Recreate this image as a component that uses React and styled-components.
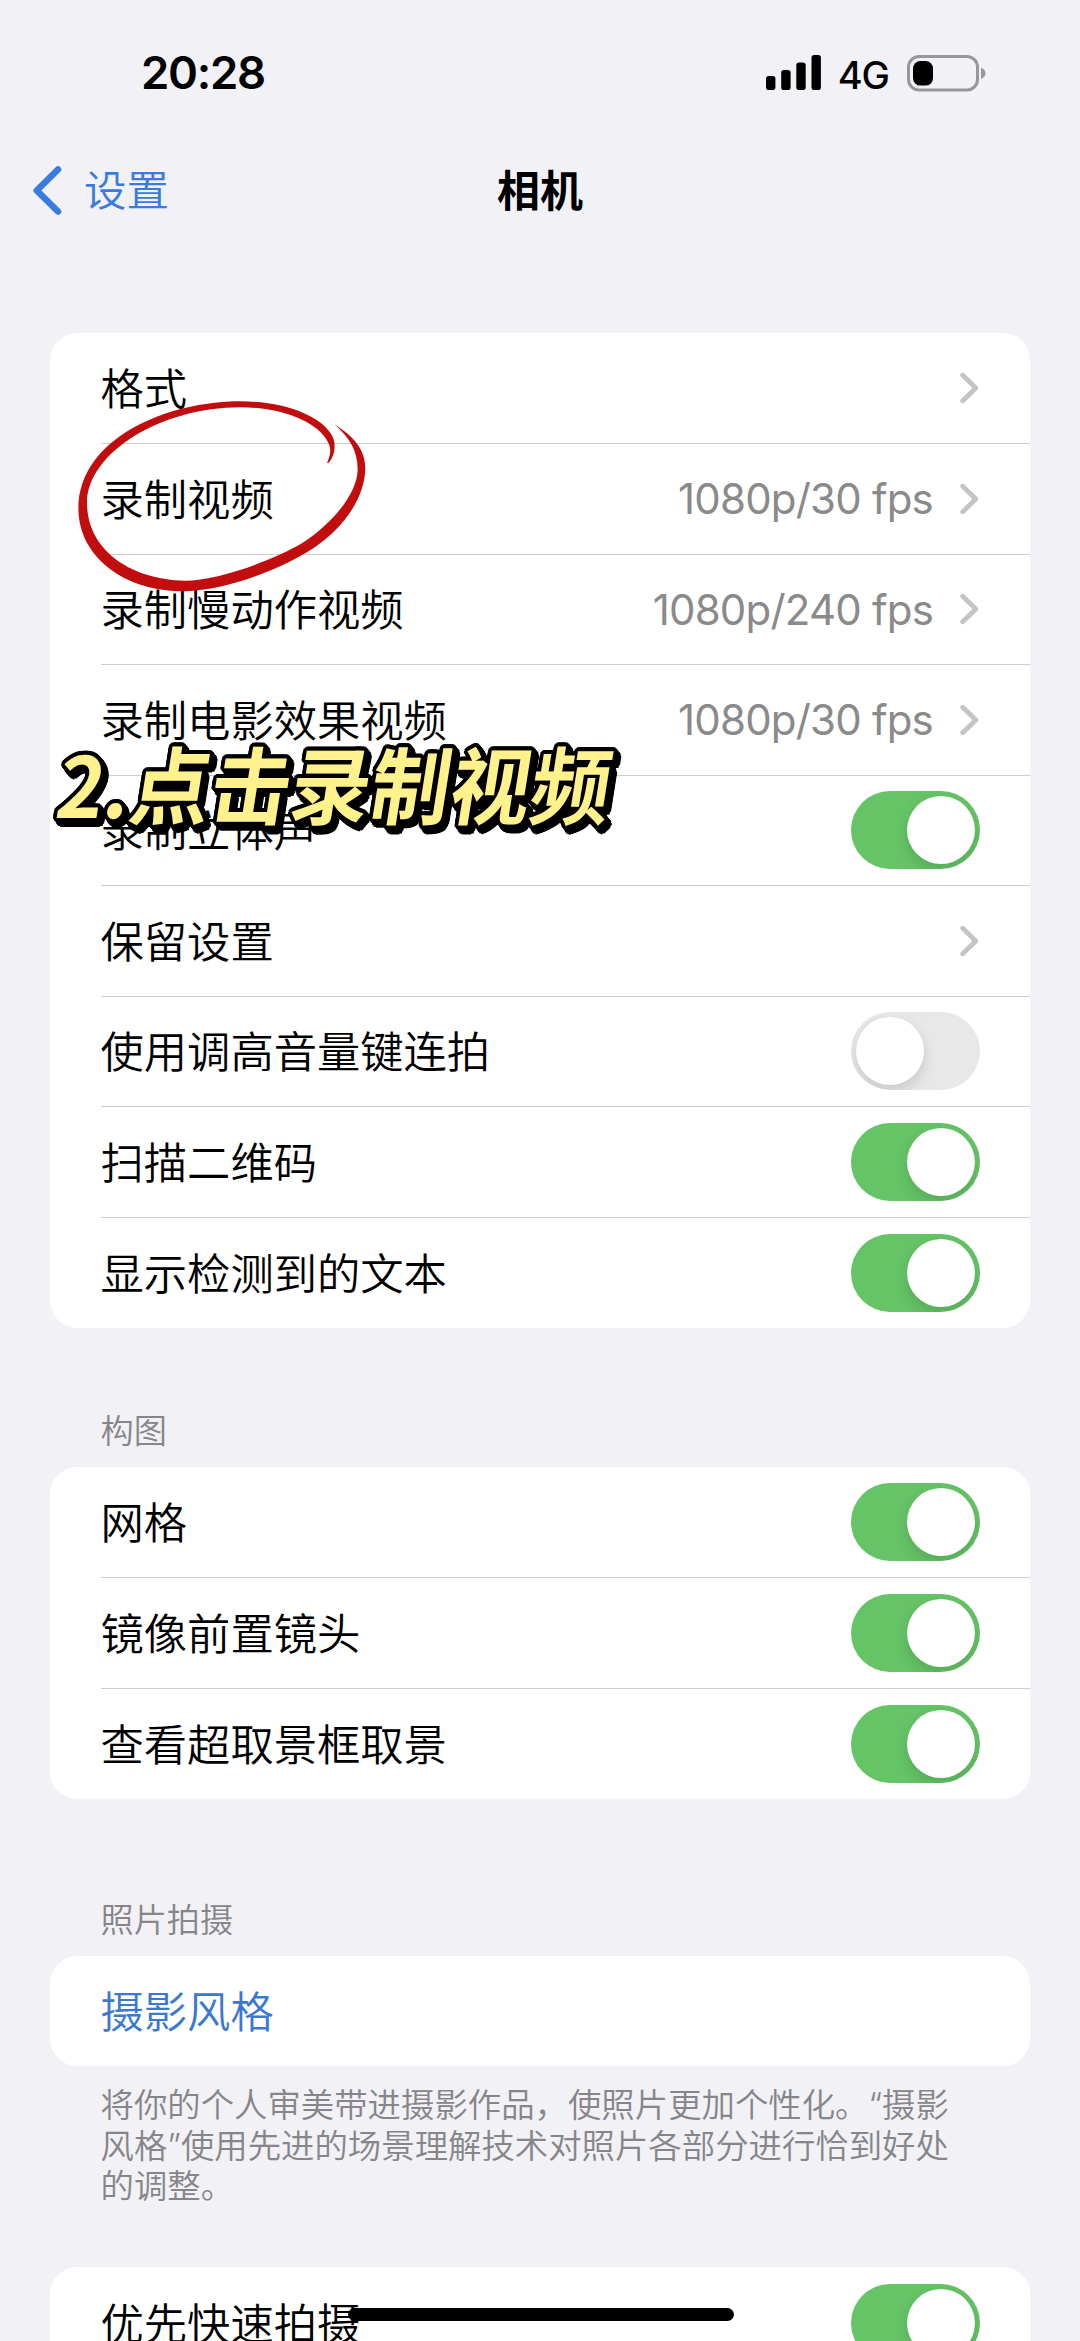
import React from "react";
import styled, { createGlobalStyle } from "styled-components";

const GlobalStyle = createGlobalStyle`
  body {
    margin: 0;
    background-color: #f1f1f6;
  }
`;

const Screen = styled.div`
  position: relative;
  display: flex;
  flex-direction: column;
  box-sizing: border-box;
  width: 1080px;
  height: 2341px;
  overflow: hidden;
  background-color: #f1f1f6;
  color: #000;
  font-family: Inter, "Noto Sans CJK SC", sans-serif;
`;

const StatusBar = styled.header`
  display: flex;
  justify-content: space-between;
  align-items: center;
  height: 146px;
  padding: 0 93px 0 141px;
  box-sizing: border-box;
  flex-shrink: 0;
`;

const Clock = styled.span`
  font-size: 45.5px;
  font-weight: 600;
  letter-spacing: -1.3px;
  line-height: 1;
`;

const StatusIcons = styled.div`
  display: flex;
  align-items: center;
`;

const Network = styled.span`
  margin: 3px 18px 0 16px;
  font-size: 38px;
  font-weight: 500;
  letter-spacing: -1px;
  line-height: 1;
`;

const NavBar = styled.nav`
  display: grid;
  grid-template-columns: 1fr auto 1fr;
  align-items: center;
  height: 90px;
  padding: 0 33px;
  margin-bottom: 96.7px;
  flex-shrink: 0;
`;

const BackLink = styled.a`
  display: flex;
  align-items: center;
  gap: 22px;
  color: #3a7be0;
  font-size: 42.5px;
  font-weight: 350;
  line-height: 60px;

  svg {
    margin-bottom: 2px;
  }
`;

const Title = styled.h1`
  margin: 0;
  font-size: 43px;
  font-weight: 700;
  line-height: 60px;
`;

const Card = styled.section`
  flex-shrink: 0;
  margin: 0 50px;
  border-radius: 27px;
  background-color: #fff;
`;

const Row = styled.div`
  display: flex;
  align-items: center;
  box-sizing: border-box;
  height: 110.5px;
  margin-left: 50.5px;
  padding-right: 50px;

  & + & {
    border-top: 1px solid #cdcdcf;
  }

  & + &:last-child {
    height: 111.3px;
  }
`;

const Label = styled.span`
  flex: 1;
  padding-top: 2px;
  font-size: 43.3px;
  font-weight: 350;
  line-height: 62px;
  color: ${({ $link }) => ($link ? "#3a78d2" : "#000")};
`;

const Value = styled.span`
  margin-right: 27px;
  padding-top: 1px;
  color: #8a8a8a;
  font-size: 42px;
  letter-spacing: -0.8px;
  line-height: 62px;
`;

const SectionTitle = styled.h2`
  flex-shrink: 0;
  height: 48px;
  margin: ${({ $top }) => $top}px 0 12px;
  padding-left: 100.5px;
  color: #85858a;
  font-size: 33.2px;
  font-weight: 350;
  line-height: 48px;
`;

const Footnote = styled.p`
  flex-shrink: 0;
  margin: 19px 0 61.2px;
  padding-left: 100.5px;
  color: #85858a;
  font-size: 33.4px;
  font-weight: 350;
  line-height: 40.2px;
  white-space: pre-line;
`;

const Track = styled.span`
  display: flex;
  justify-content: ${({ $on }) => ($on ? "flex-end" : "flex-start")};
  box-sizing: border-box;
  width: 129px;
  height: 78px;
  padding: 5px;
  overflow: hidden;
  border-radius: 39px;
  background-color: ${({ $on }) => ($on ? "#65c466" : "#e8e8e8")};
`;

const Knob = styled.span`
  width: 68px;
  height: 68px;
  border-radius: 50%;
  background-color: #fff;
  box-shadow: 0 6px 14px rgba(0, 0, 0, 0.14);
`;

const Circle = styled.svg`
  position: absolute;
  left: 74.8px;
  top: 398.3px;
`;

// round outline of the given radius, extruded down and to the right
const outline = (radius, depth) => {
  const shadows = [];
  for (let d = 0; d <= depth; d += 1) {
    for (let i = 0; i < 16; i += 1) {
      const a = (i * Math.PI) / 8;
      const x = (Math.cos(a) * radius + d).toFixed(1);
      const y = (Math.sin(a) * radius + d).toFixed(1);
      shadows.push(`${x}px ${y}px 0 #000`);
    }
  }
  return shadows.join(", ");
};

const Caption = styled.div`
  position: absolute;
  left: 59px;
  top: 723px;
  color: #fff18c;
  font-family: "Noto Sans CJK SC", sans-serif;
  font-size: 80px;
  font-weight: 700;
  line-height: 116px;
  white-space: nowrap;
  transform: skewX(-9deg) scaleY(1.05);
  text-shadow: ${outline(3.6, 5)};
`;

const HomeIndicator = styled.div`
  position: absolute;
  left: 348px;
  bottom: 20px;
  width: 386px;
  height: 13px;
  border-radius: 7px;
  background-color: #000;
`;

const SignalIcon = () => (
  <svg width="56" height="36" viewBox="0 0 56 36">
    <rect x="0" y="21" width="9.4" height="14" rx="2.8" />
    <rect x="15.2" y="15" width="9.4" height="20" rx="2.8" />
    <rect x="30.3" y="7.5" width="9.4" height="27.5" rx="2.8" />
    <rect x="45.5" y="0" width="9.4" height="35" rx="2.8" />
  </svg>
);

const BatteryIcon = () => (
  <svg width="80" height="37" viewBox="0 0 80 37">
    <rect
      x="1.5"
      y="1.5"
      width="69"
      height="33.4"
      rx="10.5"
      fill="none"
      stroke="#98989c"
      strokeWidth="3"
    />
    <rect x="6" y="6" width="20" height="24.6" rx="7.5" />
    <path d="M74 12.5C76.5 13.5 78.5 15.6 78.5 18.3S76.5 23 74 24Z" fill="#98989c" />
  </svg>
);

const BackIcon = () => (
  <svg width="29" height="49" viewBox="0 0 29 49" fill="none">
    <path
      d="M25 3.5L3.8 24.5L25 45.5"
      stroke="#3a7be0"
      strokeWidth="6.6"
      strokeLinecap="round"
      strokeLinejoin="round"
    />
  </svg>
);

const ChevronIcon = () => (
  <svg width="20" height="32" viewBox="0 0 20 32" fill="none">
    <path
      d="M2.7 3.2L15.8 16L2.7 28.8"
      stroke="#c4c4c6"
      strokeWidth="4.8"
      strokeLinecap="round"
      strokeLinejoin="round"
    />
  </svg>
);

const Toggle = ({ on }) => (
  <Track $on={on} role="switch" aria-checked={on}>
    <Knob $on={on} />
  </Track>
);

const SettingRow = ({ label, value, toggle, link }) => (
  <Row>
    <Label $link={link}>{label}</Label>
    {value && <Value>{value}</Value>}
    {toggle !== undefined && <Toggle on={toggle} />}
    {toggle === undefined && !link && <ChevronIcon />}
  </Row>
);

const recording = [
  { label: "格式" },
  { label: "录制视频", value: "1080p/30 fps" },
  { label: "录制慢动作视频", value: "1080p/240 fps" },
  { label: "录制电影效果视频", value: "1080p/30 fps" },
  { label: "录制立体声", toggle: true },
  { label: "保留设置" },
  { label: "使用调高音量键连拍", toggle: false },
  { label: "扫描二维码", toggle: true },
  { label: "显示检测到的文本", toggle: true },
];

const composition = [
  { label: "网格", toggle: true },
  { label: "镜像前置镜头", toggle: true },
  { label: "查看超取景框取景", toggle: true },
];

const App = () => (
  <>
    <GlobalStyle />
    <Screen lang="zh-CN">
      <StatusBar>
        <Clock>20:28</Clock>
        <StatusIcons>
          <SignalIcon />
          <Network>4G</Network>
          <BatteryIcon />
        </StatusIcons>
      </StatusBar>
      <NavBar>
        <BackLink>
          <BackIcon />
          设置
        </BackLink>
        <Title>相机</Title>
      </NavBar>

      <Card>
        {recording.map((item) => (
          <SettingRow key={item.label} {...item} />
        ))}
      </Card>

      <SectionTitle $top={78.7}>构图</SectionTitle>
      <Card>
        {composition.map((item) => (
          <SettingRow key={item.label} {...item} />
        ))}
      </Card>

      <SectionTitle $top={97}>照片拍摄</SectionTitle>
      <Card>
        <SettingRow label="摄影风格" link />
      </Card>
      <Footnote>
        {"将你的个人审美带进摄影作品，使照片更加个性化。“摄影\n风格”使用先进的场景理解技术对照片各部分进行恰到好处\n的调整。"}
      </Footnote>

      <Card>
        <SettingRow label="优先快速拍摄" toggle />
      </Card>

      {/* hand-drawn ring around the video row */}
      <Circle
        width="294.4"
        height="196.7"
        viewBox="130 235 855 590"
        preserveAspectRatio="none"
      >
        <path
          fill="#c20d0f"
          d="M865 431C884 412 892 372 874 343C840 288 740 245 610 245C400 245 138 355 140 570C142 710 270 815 450 815C560 812 700 760 800 700C900 640 973 540 973 445C973 390 940 350 885 315C925 352 951 390 951 450C950 520 880 610 790 670C700 725 540 783 450 783C290 780 165 690 165 550C165 400 380 263 610 263C720 263 810 298 850 345C876 378 876 395 862 430Z"
        />
      </Circle>
      <Caption>2.点击录制视频</Caption>
      <HomeIndicator />
    </Screen>
  </>
);

export default App;
